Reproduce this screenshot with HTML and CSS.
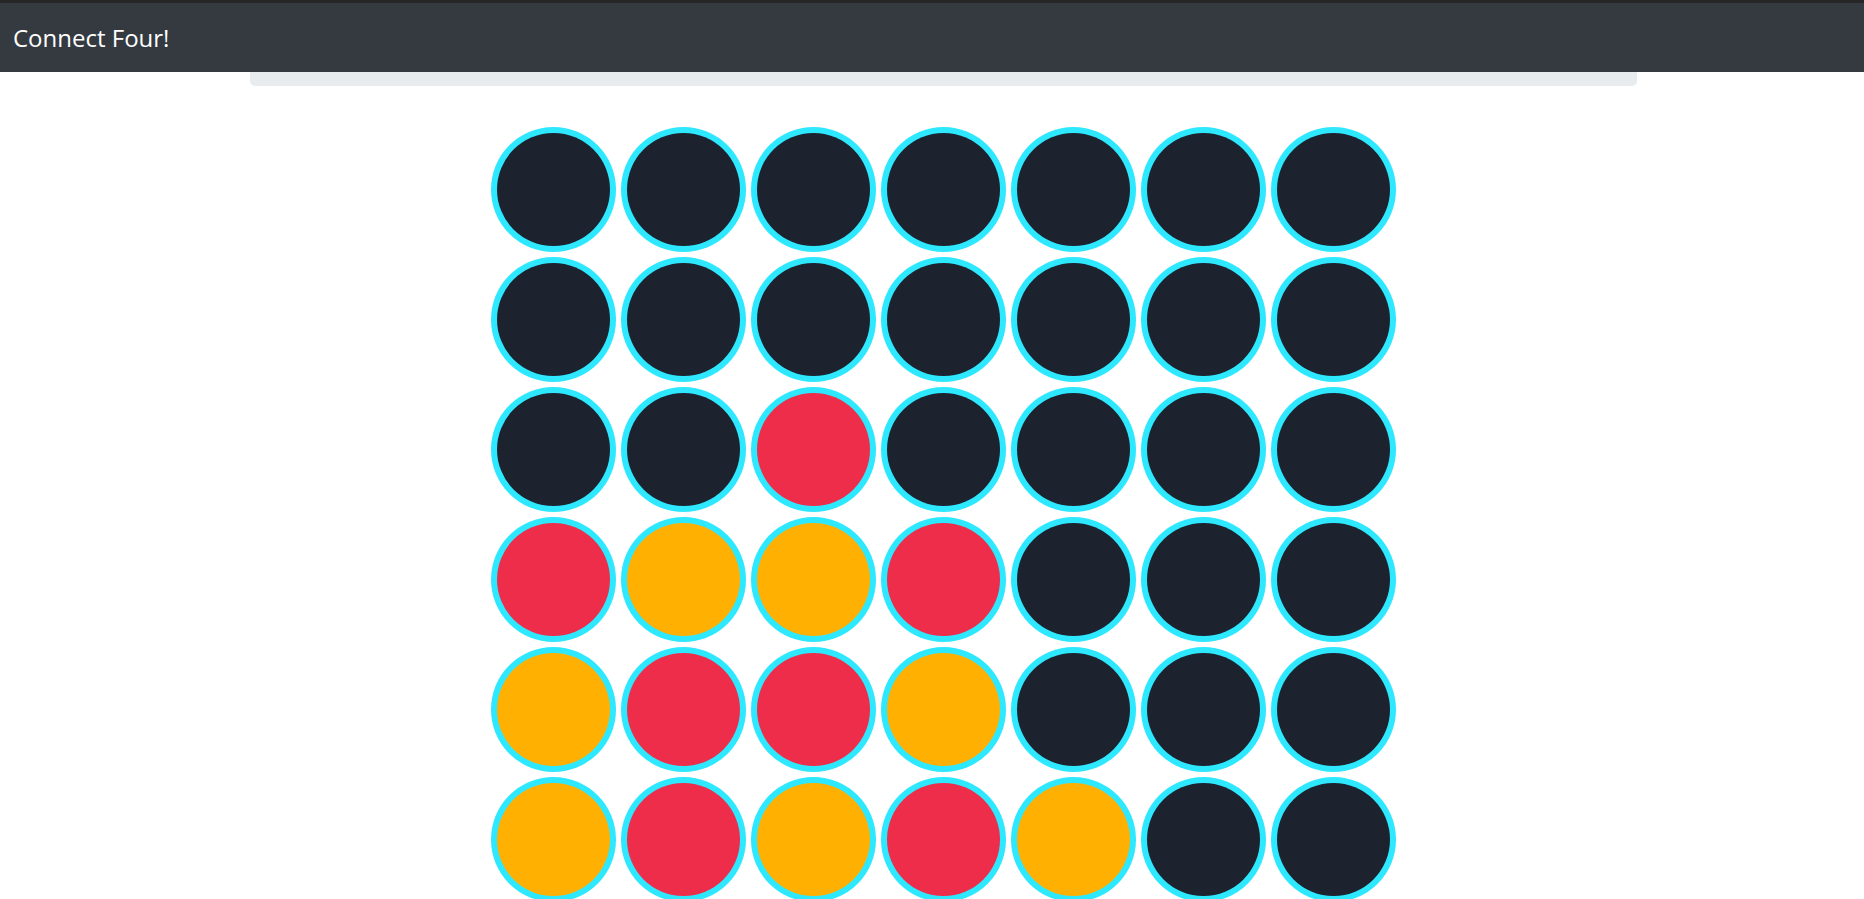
FILE: index.html
```html
<!DOCTYPE html>
<html>
<head>
<meta charset="utf-8">
<link rel="stylesheet" href="styles.css">
</head>
<body>
<header class="navbar"><span class="brand">Connect Four!</span></header>
<main class="container">
  <div class="strip"></div>
  <div class="board">
    <div class="cell"></div><div class="cell"></div><div class="cell"></div><div class="cell"></div><div class="cell"></div><div class="cell"></div><div class="cell"></div>
    <div class="cell"></div><div class="cell"></div><div class="cell"></div><div class="cell"></div><div class="cell"></div><div class="cell"></div><div class="cell"></div>
    <div class="cell"></div><div class="cell"></div><div class="cell red"></div><div class="cell"></div><div class="cell"></div><div class="cell"></div><div class="cell"></div>
    <div class="cell red"></div><div class="cell yellow"></div><div class="cell yellow"></div><div class="cell red"></div><div class="cell"></div><div class="cell"></div><div class="cell"></div>
    <div class="cell yellow"></div><div class="cell red"></div><div class="cell red"></div><div class="cell yellow"></div><div class="cell"></div><div class="cell"></div><div class="cell"></div>
    <div class="cell yellow"></div><div class="cell red"></div><div class="cell yellow"></div><div class="cell red"></div><div class="cell yellow"></div><div class="cell"></div><div class="cell"></div>
  </div>
</main>
</body>
</html>
```
FILE: styles.css
```css
html, body {
  margin: 0;
  padding: 0;
  background: #ffffff;
  font-family: "Open Sans", "Noto Sans", sans-serif;
}
.navbar {
  box-sizing: border-box;
  height: 72px;
  border-top: 3px solid #262626;
  background: #343a40;
  display: flex;
  align-items: center;
  padding-left: 13px;
}
.brand {
  color: #ffffff;
  font-size: 24px;
  line-height: 1;
  margin-top: 1px;
}
.container {
  margin-left: 250px;
  width: 1387px;
}
.strip {
  height: 14px;
  background: #e9ecef;
  border-radius: 0 0 5px 5px;
}
.board {
  display: grid;
  grid-template-columns: repeat(7, 125px);
  grid-auto-rows: 125px;
  gap: 5px;
  justify-content: center;
  padding-top: 41px;
}
.cell {
  box-sizing: border-box;
  border-radius: 50%;
  padding: 6px;
  background: #2de8ff;
  display: flex;
}
.cell::before {
  content: "";
  flex: 1;
  border-radius: 50%;
  background: #1c222e;
}
.cell.red::before {
  background: #ee2d4b;
}
.cell.yellow::before {
  background: #ffb000;
}
```
